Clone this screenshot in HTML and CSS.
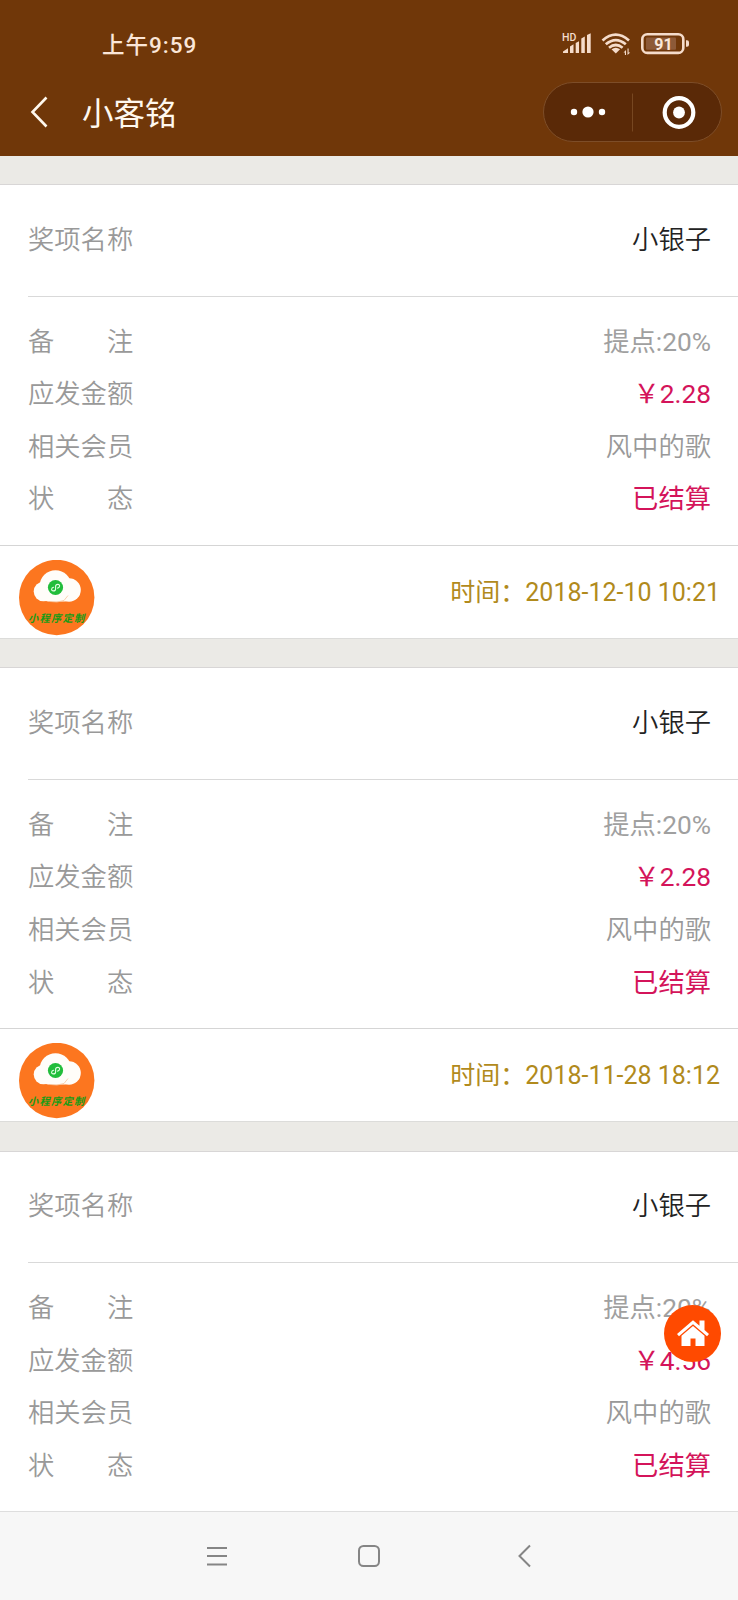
FILE: index.html
```html
<!DOCTYPE html>
<html lang="zh-CN">
<head>
    <meta charset="UTF-8">
    <meta name="viewport" content="width=device-width, initial-scale=1.0">
    <title>小客铭</title>
    <link rel="stylesheet" href="styles.css">
</head>
<body>
    <svg class="defs" width="0" height="0">
        <symbol id="avatar" viewBox="0 0 76 76">
            <circle cx="37.7" cy="37.5" r="37.7" fill="#fc761f"/>
            <g fill="#fffdf9">
                <circle cx="24.5" cy="31.5" r="9.8"/>
                <circle cx="36.5" cy="26" r="15.8"/>
                <circle cx="50" cy="30" r="11.8"/>
                <rect x="24" y="27" width="27" height="14.5" rx="5"/>
            </g>
            <path d="M31 41.5q7 1.5 14-1l4-5" fill="none" stroke="#f6c49c" stroke-width="0.8"/>
            <circle cx="36.5" cy="27.5" r="7.6" fill="#22bd3b"/>
            <path d="M34.6 27.2c-2.4.5-2.8 3.7-.3 3.7 1.3 0 2.3-.9 2.3-2v-2.5c0-1.1 1-2 2.3-2 2.5 0 2.1 3.2-.3 3.7" fill="none" stroke="#e4ffe4" stroke-width="1.1" stroke-linecap="round"/>
        </symbol>
    </svg>

    <div class="header">
        <div class="status-bar">
            <span class="clock">上午9:59</span>
            <svg class="status-icons" width="128" height="26" viewBox="0 0 128 26">
                <text class="hd" x="0" y="9.5">HD</text>
                <g fill="#f5dccb">
                    <path d="M1 22v-1.5l5-3.2V22zM8 22v-6.5l3.5-2.2V22zM13.7 22V12l3.3-1.8V22zM19.3 22V7.500l3.500-2V22zM25 22V4l3.700-1.700V22z"/>
                    <path d="M49.5 18.2q4.3-3 8.6 0L53.8 22.6z"/>
                    <path d="M61.5 21.5l2.5-2.5v5h-1.1v-2.5zM65.5 17.5h1.1v4h1.6l-2.7 2.5z"/>
                </g>
                <g fill="none" stroke="#f5dccb" stroke-width="2.7">
                    <path d="M40.5 9.5Q53.7-2.2 67 9.5"/>
                    <path d="M43.8 13.3q10-8.5 20 0"/>
                    <path d="M47 16.7q6.8-5.4 13.6 0"/>
                </g>
                <rect x="80.3" y="3.3" width="41" height="18.6" rx="5" fill="none" stroke="#f5dccb" stroke-width="2.6"/>
                <rect x="84" y="6.5" width="30" height="12.2" rx="1" fill="#8d5a38"/>
                <path d="M124 9.300h1a2 2 0 0 1 2 2v2.500a2 2 0 0 1-2 2h-1z" fill="#f5dccb"/>
                <text class="battery" x="101.5" y="18.5">91</text>
            </svg>
        </div>
        <div class="title-bar">
            <svg class="back" width="18" height="32" viewBox="0 0 18 32">
                <path d="M16.5 1.5L2.5 16l14 14.5" fill="none" stroke="#fff8ee" stroke-width="2.6"/>
            </svg>
            <h1>小客铭</h1>
            <div class="capsule">
                <svg width="178" height="58" viewBox="0 0 178 58">
                    <g fill="#fff">
                        <circle cx="30" cy="29" r="3.2"/>
                        <circle cx="44" cy="29" r="5.6"/>
                        <circle cx="58" cy="29" r="3.2"/>
                        <circle cx="135" cy="29.5" r="5.9"/>
                    </g>
                    <path d="M88.5 10.5v38" stroke="#774721"/>
                    <circle cx="135" cy="29.5" r="14.3" fill="none" stroke="#fff" stroke-width="4.2"/>
                </svg>
            </div>
        </div>
    </div>

    <div class="list">
        <div class="panel">
            <div class="panel-hd"><span>奖项名称</span><span class="name">小银子</span></div>
            <div class="panel-bd">
                <div class="row"><span class="label"><i>备</i><i>注</i></span><span class="note">提点:20%</span></div>
                <div class="row"><span class="label">应发金额</span><span class="red">￥2.28</span></div>
                <div class="row"><span class="label">相关会员</span><span>风中的歌</span></div>
                <div class="row"><span class="label"><i>状</i><i>态</i></span><span class="red">已结算</span></div>
            </div>
            <div class="panel-ft">
                <div class="avatar">
                    <svg width="76" height="76"><use href="#avatar"/></svg>
                    <span class="avatar-text">小程序定制</span>
                </div>
                <span class="time">时间：2018-12-10 10:21</span>
            </div>
        </div>

        <div class="panel">
            <div class="panel-hd"><span>奖项名称</span><span class="name">小银子</span></div>
            <div class="panel-bd">
                <div class="row"><span class="label"><i>备</i><i>注</i></span><span class="note">提点:20%</span></div>
                <div class="row"><span class="label">应发金额</span><span class="red">￥2.28</span></div>
                <div class="row"><span class="label">相关会员</span><span>风中的歌</span></div>
                <div class="row"><span class="label"><i>状</i><i>态</i></span><span class="red">已结算</span></div>
            </div>
            <div class="panel-ft">
                <div class="avatar">
                    <svg width="76" height="76"><use href="#avatar"/></svg>
                    <span class="avatar-text">小程序定制</span>
                </div>
                <span class="time">时间：2018-11-28 18:12</span>
            </div>
        </div>

        <div class="panel">
            <div class="panel-hd"><span>奖项名称</span><span class="name">小银子</span></div>
            <div class="panel-bd">
                <div class="row"><span class="label"><i>备</i><i>注</i></span><span class="note">提点:20%</span></div>
                <div class="row"><span class="label">应发金额</span><span class="red">￥4.56</span></div>
                <div class="row"><span class="label">相关会员</span><span>风中的歌</span></div>
                <div class="row"><span class="label"><i>状</i><i>态</i></span><span class="red">已结算</span></div>
            </div>
        </div>
    </div>

    <div class="home">
        <svg width="34" height="30" viewBox="0 0 34 30">
            <path d="M17 1.2L1 15l2 2.2L17 5.200l14 12 2-2.200-4.500-4V1.500h-5v5.200z" fill="#fff"/>
            <path d="M17 7L5.500 16.800V27h9v-7.500h5V27h9V16.800z" fill="#fff"/>
        </svg>
    </div>

    <div class="nav">
        <svg width="22" height="22" viewBox="0 0 22 22">
            <path d="M1 3h20M1 11h20M1 19.5h20"/>
        </svg>
        <svg width="24" height="24" viewBox="0 0 24 24">
            <rect x="2" y="2" width="20" height="20" rx="4.5"/>
        </svg>
        <svg width="22" height="24" viewBox="0 0 22 24">
            <path d="M20 1.500L9.500 12l10.500 10.500"/>
        </svg>
    </div>
</body>
</html>
```

FILE: styles.css
```css
* {
    box-sizing: border-box;
}

body {
    margin: 0;
    height: 1600px;
    display: flex;
    flex-direction: column;
    overflow: hidden;
    background: #ebeae6;
    font-family: Roboto, "Noto Sans CJK SC", sans-serif;
    font-size: 26.3px;
    font-weight: 350;
    color: #999;
}

.defs {
    display: none;
}

i {
    font-style: normal;
}

.header {
    height: 156px;
    flex-shrink: 0;
    background: #703709;
}

.status-bar {
    display: flex;
    justify-content: space-between;
    align-items: center;
    height: 68px;
    padding: 20px 48px 0 102px;
}

.clock {
    padding-top: 1px;
    font-size: 22.5px;
    font-weight: 500;
    line-height: 30px;
    letter-spacing: 1px;
    color: #fbe6d8;
}

.hd {
    font-size: 10.5px;
    font-weight: 500;
    fill: #f5dccb;
}

.battery {
    font-size: 16px;
    font-weight: 700;
    fill: #fbe9dc;
    text-anchor: middle;
}

.title-bar {
    display: flex;
    align-items: center;
    height: 88px;
    padding: 0 16px 0 30px;
}

.title-bar h1 {
    margin: 0 auto 0 34px;
    padding-bottom: 3px;
    font-size: 31.5px;
    font-weight: 400;
    color: #fff8ee;
}

.capsule {
    width: 179px;
    height: 60px;
    border: 1px solid #7d4d28;
    border-radius: 30px;
    background: #5a2907;
}

.capsule svg {
    display: block;
}

.list {
    flex: 1;
    min-height: 0;
    padding-top: 28px;
}

.panel {
    height: 455px;
    margin-bottom: 28.3px;
    background: #fff;
    border-top: 1px solid #d8d6d6;
    border-bottom: 1px solid #dcdcda;
}

.panel-hd {
    display: flex;
    justify-content: space-between;
    align-items: center;
    height: 111.5px;
    margin-left: 28px;
    padding: 0 27px 6px 0;
    border-bottom: 1px solid #d9d9d9;
}

.name {
    color: #222;
}

.panel-bd {
    height: 248.5px;
    padding: 19px 27px 0 28px;
}

.row {
    display: flex;
    justify-content: space-between;
    line-height: 52.6px;
}

.label {
    display: flex;
    justify-content: space-between;
    width: 105.2px;
}

.note {
    font-weight: 400;
    color: #a0a0a0;
}

.red {
    font-weight: 400;
    color: #d4145a;
}

.panel-ft {
    display: flex;
    justify-content: space-between;
    height: 94px;
    padding: 14px 18px 0 19px;
    border-top: 1px solid #d5d5d5;
}

.avatar {
    position: relative;
    width: 76px;
    height: 76px;
}

.avatar svg {
    display: block;
}

/* caption lies over the round logo */
.avatar-text {
    position: absolute;
    left: 9px;
    top: 51px;
    font-family: "Noto Sans CJK SC", sans-serif;
    font-size: 10.3px;
    font-style: italic;
    font-weight: 700;
    line-height: 14px;
    letter-spacing: 1.2px;
    white-space: nowrap;
    color: #189b16;
}

.time {
    padding-top: 15px;
    font-size: 25px;
    font-weight: 400;
    line-height: 36px;
    color: #b18a1c;
}

.home {
    position: fixed;
    right: 17px;
    bottom: 238px;
    width: 57px;
    height: 57px;
    display: flex;
    align-items: center;
    justify-content: center;
    border-radius: 50%;
    background: #ff4a00;
}

.nav {
    display: flex;
    justify-content: space-between;
    align-items: center;
    height: 89px;
    flex-shrink: 0;
    padding: 0 206px;
    background: #f7f7f7;
    border-top: 1px solid #dedede;
}

.nav svg {
    fill: none;
    stroke: #858585;
    stroke-width: 2;
}
```
